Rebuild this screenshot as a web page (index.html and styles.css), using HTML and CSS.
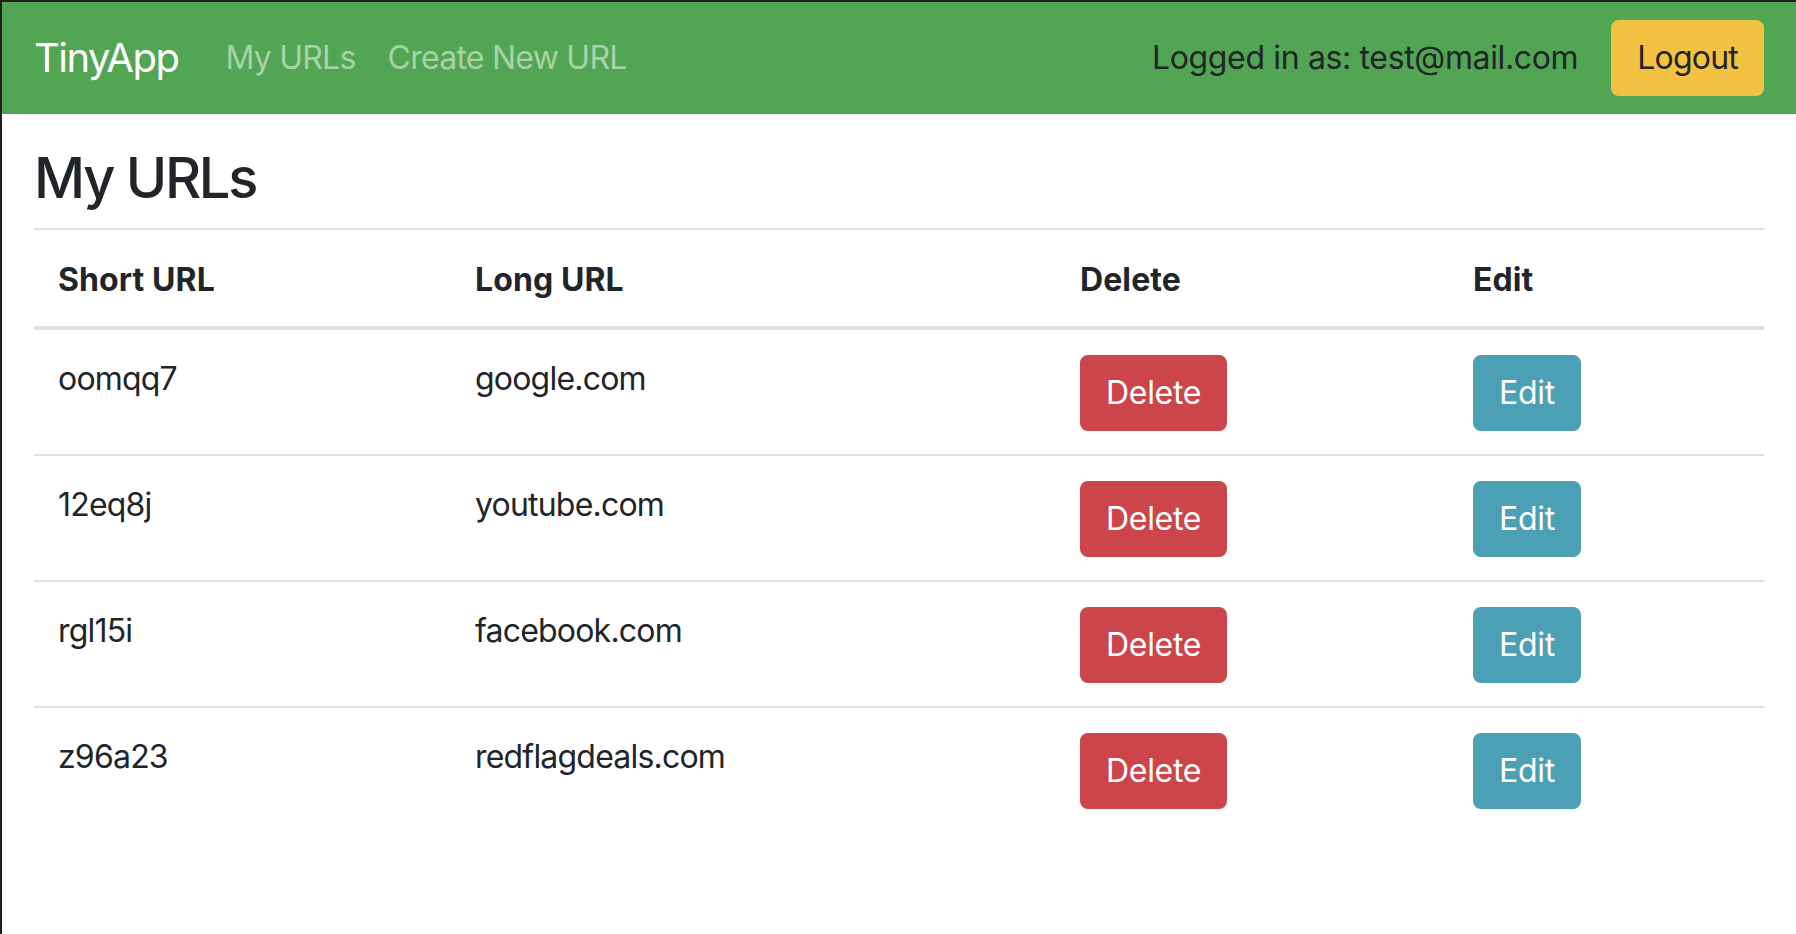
FILE: index.html
```html
<!DOCTYPE html>
<html lang="en">
<head>
<meta charset="utf-8">
<title>TinyApp</title>
<link rel="stylesheet" href="styles.css">
</head>
<body>
<div class="window">
  <nav class="navbar">
    <a class="brand" href="#">TinyApp</a>
    <div class="nav-links">
      <a class="nav-link" href="#">My URLs</a>
      <a class="nav-link" href="#">Create New URL</a>
    </div>
    <div class="nav-right">
      <span class="user">Logged in as: test@mail.com</span>
      <button class="btn btn-warning">Logout</button>
    </div>
  </nav>
  <main class="content">
    <h2 class="title">My URLs</h2>
    <table class="url-table">
      <thead>
        <tr>
          <th class="col-short">Short URL</th>
          <th class="col-long">Long URL</th>
          <th class="col-delete">Delete</th>
          <th class="col-edit">Edit</th>
        </tr>
      </thead>
      <tbody>
        <tr>
          <td>oomqq7</td>
          <td>google.com</td>
          <td><button class="btn btn-danger">Delete</button></td>
          <td><button class="btn btn-info">Edit</button></td>
        </tr>
        <tr>
          <td>12eq8j</td>
          <td>youtube.com</td>
          <td><button class="btn btn-danger">Delete</button></td>
          <td><button class="btn btn-info">Edit</button></td>
        </tr>
        <tr>
          <td>rgl15i</td>
          <td>facebook.com</td>
          <td><button class="btn btn-danger">Delete</button></td>
          <td><button class="btn btn-info">Edit</button></td>
        </tr>
        <tr>
          <td>z96a23</td>
          <td>redflagdeals.com</td>
          <td><button class="btn btn-danger">Delete</button></td>
          <td><button class="btn btn-info">Edit</button></td>
        </tr>
      </tbody>
    </table>
  </main>
</div>
</body>
</html>
```

FILE: styles.css
```css
html, body {
  margin: 0;
  padding: 0;
  background: #ffffff;
}

body {
  font-family: Inter, "Noto Sans", "Liberation Sans", sans-serif;
  color: #212529;
  font-size: 32px;
  line-height: 48px;
}

.window {
  min-height: 932px;
  border-top: 2px solid #1f1f1f;
  border-left: 2px solid #1f1f1f;
}

.navbar {
  display: flex;
  align-items: center;
  background: #52a552;
  height: 112px;
  padding: 0 32px;
  box-sizing: border-box;
}

.brand {
  color: #ffffff;
  font-size: 40px;
  line-height: 60px;
  text-decoration: none;
  margin-right: 31px;
  letter-spacing: -1.5px;
}

.nav-links {
  display: flex;
}

.nav-link {
  color: #a9d2a9;
  text-decoration: none;
  padding: 0 16px;
  letter-spacing: -0.75px;
}

.nav-right {
  margin-left: auto;
  display: flex;
  align-items: center;
}

.user {
  color: #212529;
  margin-right: 33px;
  letter-spacing: -0.35px;
}

.btn {
  font-family: inherit;
  font-size: 32px;
  line-height: 48px;
  padding: 12px 24px;
  border: 2px solid transparent;
  border-radius: 8px;
  cursor: pointer;
  letter-spacing: -0.3px;
}

.btn-warning {
  background: #f4c242;
  border-color: #f4c242;
  color: #212529;
  letter-spacing: -0.8px;
}

.btn-danger {
  background: #cb454a;
  border-color: #cb454a;
  color: #ffffff;
}

.btn-info {
  background: #4ca0b5;
  border-color: #4ca0b5;
  color: #ffffff;
}

.content {
  padding: 31px 32px 0 32px;
}

.title {
  font-size: 56px;
  font-weight: 500;
  line-height: 67px;
  margin: 0 0 16px 0;
  letter-spacing: -2.3px;
}

.url-table {
  width: 100%;
  border-collapse: collapse;
  table-layout: fixed;
}

.url-table th,
.url-table td {
  box-sizing: border-box;
  text-align: left;
  vertical-align: top;
  padding: 24px;
  border-top: 2px solid #dee2e6;
  letter-spacing: -0.8px;
}

.url-table td {
  padding: 25px 24px 23px;
}

.url-table th {
  font-weight: 700;
  border-bottom: 4px solid #dee2e6;
  letter-spacing: 0.1px;
  padding: 26px 24px 22px;
}

.url-table thead th {
  vertical-align: bottom;
}

.col-short { width: 417px; }
.col-long { width: 605px; }
.col-delete { width: 393px; }
.col-edit { width: 315px; }
```
